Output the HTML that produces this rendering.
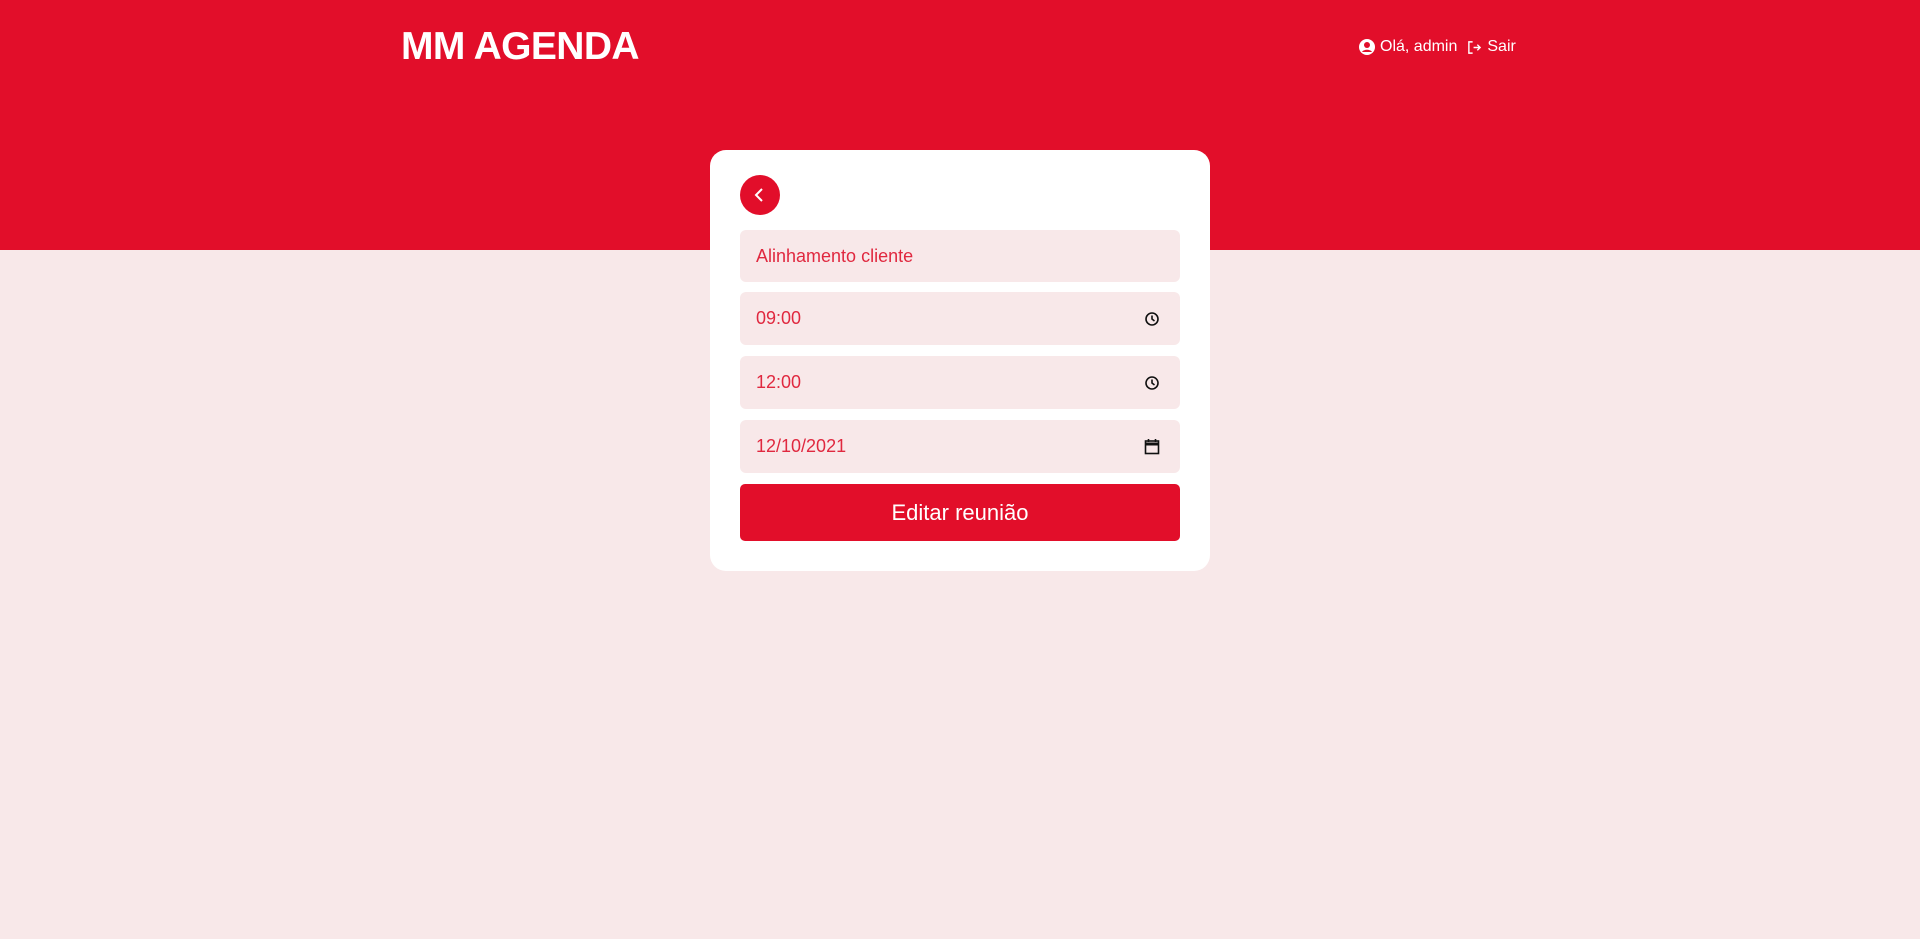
<!DOCTYPE html>
<html><head><meta charset="utf-8"><style>
*{box-sizing:border-box;margin:0;padding:0}
body{width:1920px;height:939px;background:#f8e8e9;font-family:"Liberation Sans",sans-serif;position:relative;overflow:hidden}
.hdr{position:absolute;left:0;top:0;width:1920px;height:250px;background:#e20e2a}
.title{position:absolute;left:401px;top:25px;color:#fff;font-weight:bold;font-size:39px;letter-spacing:-0.6px}
.nav{position:absolute;left:1359px;top:38px;color:#fff;font-size:16px;display:flex;align-items:center;gap:5px}
.card{position:absolute;left:710px;top:150px;width:500px;height:421px;background:#fff;border-radius:16px}
.back{position:absolute;left:740px;top:175px;width:40px;height:40px;border-radius:50%;background:#e20e2a}
.inp{position:absolute;left:740px;width:440px;background:#f8e8e9;border-radius:6px;color:#e0283f;font-size:18px;padding-left:16px;display:flex;align-items:center}
.inp svg{position:absolute;right:20px}
.btn{position:absolute;left:740px;top:484px;width:440px;height:57px;background:#e20e2a;border-radius:5px;color:#fff;font-size:22px;display:flex;align-items:center;justify-content:center}
</style></head><body>
<div class="hdr"></div>
<div class="title">MM AGENDA</div>
<div class="nav">
<svg width="16" height="16" viewBox="0 0 16 16"><circle cx="8" cy="8" r="8" fill="#fff"/><circle cx="8" cy="6" r="3" fill="#e20e2a"/><path d="M3 13c1.5-3 8.5-3 10 0" fill="#e20e2a"/></svg>
<span>Olá, admin</span>
<svg width="15" height="15" viewBox="0 0 16 16" style="margin-left:5px" fill="none" stroke="#fff" stroke-width="1.5"><path d="M6 2H2v12h4M7 8h7M11 5l3 3-3 3"/></svg>
<span>Sair</span>
</div>
<div class="card"></div>
<div class="back"><svg width="40" height="40" viewBox="0 0 40 40"><path d="M22 14l-6 6 6 6" fill="none" stroke="#fff" stroke-width="2"/></svg></div>
<div class="inp" style="top:230px;height:52px">Alinhamento cliente</div>
<div class="inp" style="top:292px;height:53px">09:00<svg width="16" height="16" viewBox="0 0 16 16" fill="none" stroke="#111" stroke-width="1.6"><circle cx="8" cy="8" r="6"/><path d="M8 4.5V8l2.5 2"/></svg></div>
<div class="inp" style="top:356px;height:53px">12:00<svg width="16" height="16" viewBox="0 0 16 16" fill="none" stroke="#111" stroke-width="1.6"><circle cx="8" cy="8" r="6"/><path d="M8 4.5V8l2.5 2"/></svg></div>
<div class="inp" style="top:420px;height:53px">12/10/2021<svg width="16" height="17" viewBox="0 0 16 17" fill="none" stroke="#111" stroke-width="1.6"><rect x="1.5" y="3" width="13" height="12.5"/><path d="M1.5 6h13" stroke-width="3"/><path d="M4.5 1v3M11.5 1v3"/></svg></div>
<div class="btn">Editar reunião</div>
</body></html>
